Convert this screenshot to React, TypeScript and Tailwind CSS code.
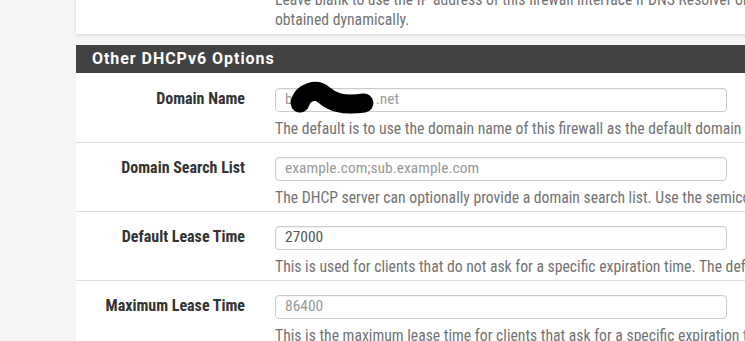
import React from 'react'

const font = "font-['Roboto_Condensed','Roboto','Liberation_Sans',sans-serif]"

type Row = {
  label: string
  value?: string
  placeholder?: string
  help: string
  redacted?: boolean
}

const rows: Row[] = [
  {
    label: 'Domain Name',
    redacted: true,
    help: 'The default is to use the domain name of this firewall as the default domain name provided by DHCP.',
  },
  {
    label: 'Domain Search List',
    placeholder: 'example.com;sub.example.com',
    help: 'The DHCP server can optionally provide a domain search list. Use the semicolon character as separator.',
  },
  {
    label: 'Default Lease Time',
    value: '27000',
    help: 'This is used for clients that do not ask for a specific expiration time. The default is 7200 seconds.',
  },
  {
    label: 'Maximum Lease Time',
    placeholder: '86400',
    help: 'This is the maximum lease time for clients that ask for a specific expiration time. The default is 86400 seconds.',
  },
]

// redaction mark drawn over the domain name
function Scribble() {
  return (
    <svg
      className="pointer-events-none absolute left-0 top-[-8px] overflow-visible"
      width="110"
      height="40"
      viewBox="0 0 110 40"
    >
      <path
        d="M24 22 C27 11, 40 7, 48 14 C56 21, 66 25, 88 22"
        fill="none"
        stroke="#000"
        strokeWidth="19"
        strokeLinecap="round"
        strokeLinejoin="round"
      />
    </svg>
  )
}

function FieldRow({ row, first }: { row: Row; first: boolean }) {
  return (
    <div
      className={`flex pb-[3px] ${first ? 'pt-[15px]' : 'border-t border-[#e0e0e0] pt-[14px]'}`}
    >
      <div className="w-[169px] shrink-0 text-right text-[16px] leading-[22px] font-bold text-[#333]">
        {row.label}
      </div>
      <div className="ml-[30px] flex-1">
        <div className="relative flex h-[24px] w-[452px] items-center rounded-[4px] border border-[#cccccc] px-[9px] text-[15.5px] shadow-[inset_0_1px_1px_rgba(0,0,0,0.05)]">
          {row.redacted ? (
            <>
              <span className="text-[#999]">
                b<span className="inline-block w-[83px]" />.net
              </span>
              <Scribble />
            </>
          ) : row.value ? (
            <span className="text-[#555]">{row.value}</span>
          ) : (
            <span className="text-[#999]">{row.placeholder}</span>
          )}
        </div>
        <div className="mt-[7px] whitespace-nowrap text-[15.7px] leading-[20px] text-[#737373]">
          {row.help}
        </div>
      </div>
    </div>
  )
}

export default function App() {
  return (
    <div className={`${font} h-[341px] w-[745px] overflow-hidden bg-[#f5f5f5]`}>
      <div className="ml-[76px] w-[720px]">
        {/* Previous panel tail */}
        <div className="bg-white pb-[4px] shadow-[0_1px_3px_rgba(0,0,0,0.15)]">
          <div className="mt-[-10px] ml-[199px] whitespace-nowrap text-[15.7px] leading-[20px] text-[#737373]">
            <div>Leave blank to use the IP address of this firewall interface if DNS Resolver or Forwarder is enabled.</div>
            <div>obtained dynamically.</div>
          </div>
        </div>

        {/* Other DHCPv6 Options */}
        <div className="mt-[11px] bg-white">
          <div className="flex h-[28px] items-center bg-[#424242] px-[16px] font-['Roboto','Liberation_Sans',sans-serif] text-[16px] font-bold tracking-[0.95px] text-white">
            Other DHCPv6 Options
          </div>
          {rows.map((row, i) => (
            <FieldRow key={row.label} row={row} first={i === 0} />
          ))}
        </div>
      </div>
    </div>
  )
}
